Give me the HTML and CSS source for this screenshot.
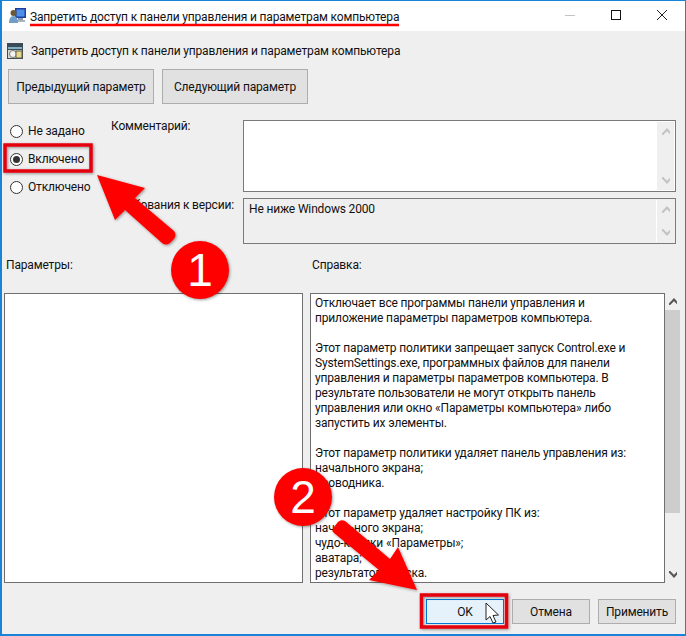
FILE: index.html
```html
<!DOCTYPE html>
<html lang="ru">
<head>
<meta charset="utf-8">
<title>Запретить доступ к панели управления</title>
<link rel="stylesheet" href="styles.css">
</head>
<body>
<div class="window">
  <header class="titlebar">
    <svg class="title-icon" width="17" height="16" viewBox="0 0 17 16">
      <rect x="6" y="0" width="11" height="10" fill="#1d3f9e"/>
      <rect x="7.500" y="1.500" width="8" height="7" fill="#4f8ee8"/>
      <rect x="9" y="10" width="5" height="2" fill="#8d99a8"/>
      <rect x="7" y="12" width="9" height="2" fill="#a9b3bf"/>
      <circle cx="4.500" cy="5" r="3" fill="#6b5a3a"/>
      <path d="M0 15c0-4 1.500-7 4.500-7s4.500 3 4.500 7z" fill="#6f9fc8"/>
    </svg>
    <span class="title-text">Запретить доступ к панели управления и параметрам компьютера</span>
    <div class="caption">
      <svg width="46" height="20" viewBox="0 0 46 20"><path d="M18 9.500h10" stroke="#c4c4c4"/></svg>
      <svg width="46" height="20" viewBox="0 0 46 20"><rect x="18.500" y="4.500" width="9" height="9" fill="none" stroke="#111"/></svg>
      <svg width="46" height="20" viewBox="0 0 46 20"><path d="M18 4l10 10M28 4l-10 10" stroke="#222" fill="none"/></svg>
    </div>
  </header>

  <main class="content">
    <div class="policy">
      <svg width="16" height="16" viewBox="0 0 16 16">
        <rect x="0" y="0" width="16" height="16" fill="#3b4a57"/>
        <rect x="1" y="4" width="14" height="2" fill="#7fb0c4"/>
        <rect x="1" y="7" width="14" height="8" fill="#d8d8c8"/>
        <circle cx="6" cy="11" r="3.500" fill="#f4f4f4" stroke="#7a7a7a"/>
        <rect x="9" y="8" width="6" height="7" fill="#e9d889" stroke="#5d5d4a"/>
      </svg>
      <span>Запретить доступ к панели управления и параметрам компьютера</span>
    </div>

    <div class="nav-buttons">
      <button class="btn btn-nav" type="button">Предыдущий параметр</button>
      <button class="btn btn-nav" type="button">Следующий параметр</button>
    </div>

    <section class="settings">
      <div class="radios">
        <label class="radio"><span class="dot"></span>Не задано</label>
        <label class="radio"><span class="dot dot-on"></span>Включено</label>
        <label class="radio"><span class="dot"></span>Отключено</label>
      </div>
      <div class="labels">
        <div class="label-comment">Комментарий:</div>
        <div class="label-version">Требования к версии:</div>
      </div>
      <div class="boxes">
        <div class="box box-comment">
          <div class="box-fill"></div>
          <div class="mini-scroll"><i class="chev"></i><i class="chev chev-down"></i></div>
        </div>
        <div class="box box-version">
          <div class="box-fill">Не ниже Windows 2000</div>
          <div class="mini-scroll mini-divided"><i class="chev"></i><i class="chev chev-down"></i></div>
        </div>
      </div>
    </section>

    <div class="pane-labels">
      <span class="label-params">Параметры:</span>
      <span class="label-help">Справка:</span>
    </div>

    <section class="panes">
      <div class="pane pane-params"></div>
      <div class="pane pane-help">
        <p>Отключает все программы панели управления и<br>приложение параметры параметров компьютера.</p>
        <p>Этот параметр политики запрещает запуск Control.exe и<br>SystemSettings.exe, программных файлов для панели<br>управления и параметры параметров компьютера. В<br>результате пользователи не могут открыть панель<br>управления или окно «Параметры компьютера» либо<br>запустить их элементы.</p>
        <p>Этот параметр политики удаляет панель управления из:<br>начального экрана;<br>проводника.</p>
        <p>Этот параметр удаляет настройку ПК из:<br>начального экрана;<br>чудо-кнопки «Параметры»;<br>аватара;<br>результатов поиска.</p>
      </div>
      <div class="scrollbar">
        <i class="chev chev-dark"></i>
        <div class="thumb"></div>
        <i class="chev chev-dark chev-down"></i>
      </div>
    </section>

    <footer class="actions">
      <button class="btn btn-action btn-ok" type="button">OK</button>
      <button class="btn btn-action" type="button">Отмена</button>
      <button class="btn btn-action" type="button">Применить</button>
    </footer>
  </main>

  <svg class="markup" width="686" height="636" viewBox="0 0 686 636">
    <defs>
      <filter id="soft" x="-20%" y="-20%" width="140%" height="140%">
        <feDropShadow dx="1" dy="1" stdDeviation="1.500" flood-color="#000" flood-opacity=".4"/>
      </filter>
    </defs>
    <path d="M30 25h369" stroke="#f00" stroke-width="2.500" fill="none"/>
    <rect x="5" y="145" width="86" height="26" fill="none" stroke="#e4000f" stroke-width="3.500" filter="url(#soft)"/>
    <path d="M97 175L145 188 135 198 174 231q3 4 0 8l-4 4q-4 3-8 0L125 210 115 220z" fill="#f00" filter="url(#soft)"/>
    <path d="M345 521L390 559 398 547 417 590 369 580 379 570 334 533q-3-3 0-6l4-5q3-3 7-1z" fill="#f00" filter="url(#soft)"/>
    <rect x="421.500" y="595" width="85" height="32" fill="none" stroke="#e4000f" stroke-width="3.500" filter="url(#soft)"/>
    <path d="M486 603v17l4-3.500 3 6.500 3-1-3-6.500 5.500-.5z" fill="#fff" stroke="#222"/>
  </svg>
  <div class="badge badge-one">1</div>
  <div class="badge badge-two">2</div>
</div>
</body>
</html>
```
FILE: styles.css
```css
* { box-sizing: border-box; }
html, body { margin: 0; padding: 0; }
body { width: 686px; height: 636px; overflow: hidden; font-family: Roboto, "Noto Sans", sans-serif; font-size: 12px; letter-spacing: -0.16px; color: #111; }
.window { position: relative; width: 686px; height: 636px; border: 2px solid #1883d7; border-top-width: 1px; border-right-width: 1px; background: #efefef; display: flex; flex-direction: column; overflow: hidden; }
.titlebar { height: 30px; flex: none; background: #fff; display: flex; align-items: center; padding-left: 7px; }
.title-icon { flex: none; margin-right: 4px; }
.title-text { flex: 1; padding-top: 2px; white-space: nowrap; }
.caption { display: flex; height: 20px; }
.caption svg { display: block; }
.content { flex: 1; display: flex; flex-direction: column; padding: 0 0 0 2px; }
.policy { display: flex; align-items: center; gap: 8px; height: 20px; margin: 10px 0 0 3px; }
.policy svg { flex: none; }
.policy span { white-space: nowrap; }
.nav-buttons { display: flex; gap: 8px; margin: 8px 0 0 4px; }
.btn { font: inherit; letter-spacing: inherit; color: #111; background: #e1e1e1; border: 1px solid #adadad; padding: 0; }
.btn-nav { width: 146px; height: 35px; }
.settings { display: grid; grid-template-columns: 102px 137px 433px; margin-top: 16px; height: 125px; }
.radios { display: flex; flex-direction: column; padding: 1px 0 0 6px; gap: 8px; }
.radio { display: flex; align-items: center; gap: 5px; height: 20px; white-space: nowrap; }
.dot { width: 13px; height: 13px; border: 1px solid #333; border-radius: 50%; background: #fff; flex: none; display: flex; align-items: center; justify-content: center; }
.dot-on::before { content: ""; width: 7px; height: 7px; border-radius: 50%; background: #333; }
.labels { display: flex; flex-direction: column; padding-left: 5px; }
.label-comment { height: 78px; line-height: 12px; }
.label-version { white-space: nowrap; text-align: right; padding-right: 9px; line-height: 14px; margin-left: -40px; }
.boxes { display: flex; flex-direction: column; gap: 6px; }
.box { border: 1px solid #7a7a7a; display: flex; }
.box-comment { height: 72px; background: #fff; padding: 1px; }
.box-version { height: 46px; background: #efefef; padding: 1px; }
.box-fill { flex: 1; padding: 2px 4px; line-height: 15px; }
.mini-scroll { width: 17px; background: #efefef; display: flex; flex-direction: column; justify-content: space-between; align-items: center; padding: 5px 0; }
.mini-divided { border-left: 1px solid #fff; width: 18px; }
.chev { display: block; width: 8px; height: 8px; position: relative; overflow: hidden; flex: none; }
.chev::before { content: ""; position: absolute; left: 1px; top: 3px; width: 6px; height: 6px; border-left: 2px solid #c2c2c2; border-top: 2px solid #c2c2c2; transform: rotate(45deg); }
.chev-down { transform: scaleY(-1); }
.chev-dark::before { border-color: #555; }
.pane-labels { display: flex; margin-top: 11px; height: 17px; align-items: center; }
.label-params { width: 308px; padding-left: 2px; }
.panes { display: flex; align-items: stretch; margin-top: 20px; height: 290px; }
.pane { border: 1px solid #6f6f6f; background: #fff; }
.pane-params { width: 299px; }
.pane-help { width: 355px; margin-left: 7px; padding: 2px 4px; line-height: 15px; overflow: hidden; }
.pane-help p { margin: 0 0 15px; white-space: nowrap; }
.scrollbar { width: 15px; display: flex; flex-direction: column; align-items: center; padding: 4px 0; }
.thumb { width: 15px; height: 203px; background: #cdcdcd; margin: 5px 0 auto; flex: none; }
.actions { display: flex; justify-content: flex-end; gap: 8px; padding-right: 9px; margin-top: 16px; }
.btn-action { width: 78px; height: 25px; }
.btn-ok { background: #e5f1fb; border: 1px solid #0078d7; }
.markup { position: absolute; left: -2px; top: -1px; pointer-events: none; }
.badge { position: absolute; width: 58px; height: 58px; border-radius: 50%; background: #f00; color: #fff; font-family: "Liberation Sans", sans-serif; font-size: 46px; line-height: 58px; letter-spacing: 0; text-align: center; box-shadow: 1px 1px 3px rgba(0,0,0,.4); }
.badge-one { left: 169px; top: 240px; }
.badge-two { left: 272px; top: 467px; }
```
